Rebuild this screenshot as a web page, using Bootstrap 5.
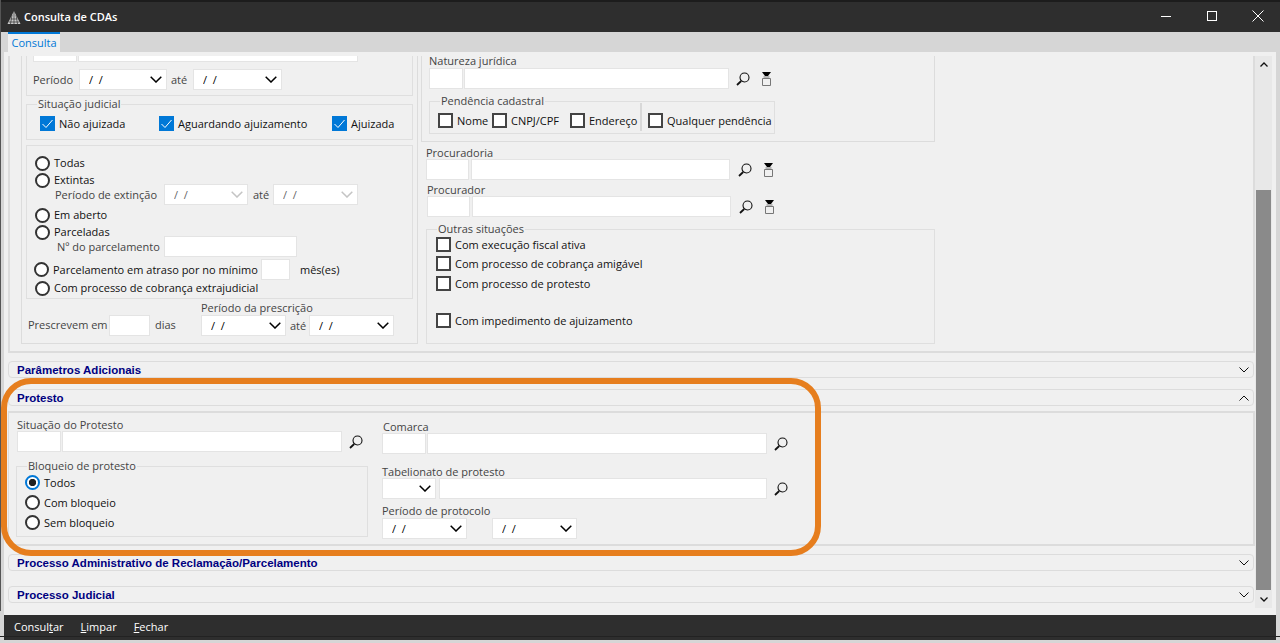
<!doctype html>
<html lang="pt-BR"><head><meta charset="utf-8">
<title>Consulta de CDAs</title>
<link rel="stylesheet" href="https://cdn.jsdelivr.net/npm/bootstrap@5.3.0/dist/css/bootstrap.min.css">
<style>
html,body{height:643px;overflow:hidden;margin:0;background:#d6d6d6;}
body{font:11px/14px "Open Sans","Noto Sans",sans-serif;color:#111;}
.win-title{height:32px;background:#2e2e2e;border-top:2px solid #1c1c1c;color:#fff;font-weight:600;font-size:11px;padding-left:6px;}
.win-title svg{display:block}
.win-ctrls{margin-left:auto;margin-right:-1px;align-self:flex-start;}
.win-ctrl{width:46px;height:28px;display:flex;align-items:center;justify-content:center;}
.win-left{border-left:1px solid #555;height:611px;}
.tabstrip{height:20px;padding-left:7px;}
.tab-on{width:52px;height:20px;background:#f0f0f0;border-top:2px solid #0078d7;color:#0078d7;text-align:center;line-height:17px;}
.client{width:1272px;margin-left:3px;height:563px;background:#f0f0f0;padding-top:4px;}
.pane{width:1251px;flex:none;}
.outer{margin-left:4px;width:1247px;height:297px;border:2px solid #dcdcdc;border-top:0;}
.subl{margin-left:11px;width:397px;height:288px;border:1px solid #dcdcdc;border-top:0;flex:none;padding-left:4px;}
.grp{position:relative;width:387px;border:1px solid #dfdfdf;}
.grp1{height:40px;border-top:0;padding-left:6px;}
.grp2{height:36px;margin-top:8px;padding:11px 0 0 13px;}
.grp3{height:154px;margin-top:5px;padding:9px 0 0 8px;}
.legend{position:absolute;top:-8px;left:10px;background:#f0f0f0;padding:0 1px;color:#444;line-height:14px;}
.clipped{height:6px;overflow:hidden;}
.clipped>*{margin-top:-15px;}
.txt{color:#444;white-space:nowrap;}
.nm{white-space:nowrap;}
.form-control.fld,.form-select.fld{height:21px;min-height:0;padding:0;border:1px solid #e4e4e4;border-radius:0;background-color:#fff;font-size:11px;line-height:14px;box-shadow:none;flex:none;}
.form-select.fld{padding-left:9px;color:#000;background-image:url("data:image/svg+xml,%3csvg xmlns='http://www.w3.org/2000/svg' width='12' height='7'%3e%3cpath d='M.7.7 6 6 11.3.7' fill='none' stroke='%23000' stroke-width='1.5'/%3e%3c/svg%3e");background-position:right 4px center;background-size:12px 7px;}
.form-select.fld:disabled{color:#666;background-color:#fff;background-image:url("data:image/svg+xml,%3csvg xmlns='http://www.w3.org/2000/svg' width='12' height='7'%3e%3cpath d='M.7.7 6 6 11.3.7' fill='none' stroke='%23c4c4c4' stroke-width='1.5'/%3e%3c/svg%3e");}
.form-check-input.tick,.form-check-input.dot{width:15px;height:15px;margin:0;flex:none;background-color:#fff;box-shadow:none;float:none;}
.form-check-input.tick{border:2px solid #444;border-radius:0;}
.form-check-input.tick:checked{background-color:#0078d7;border-color:#0078d7;background-image:url("data:image/svg+xml,%3csvg xmlns='http://www.w3.org/2000/svg' viewBox='0 0 15 15'%3e%3cpath d='M2.500 8 6 11.500 12.500 4' fill='none' stroke='%23fff' stroke-width='1'/%3e%3c/svg%3e");background-size:15px 15px;background-position:center;}
.form-check-input.dot{border:2px solid #333;border-radius:50%;}
.form-check-input.dot:checked{background-color:#fff;border-color:#0078d7;background-image:radial-gradient(circle,#222 0 3.4px,#fff 3.9px);}
.form-check-input.tick.ml6{margin-left:6px;}
.w44{width:44px}.w34{width:34px}.w84{width:84px}.w85{width:85px}.w88{width:88px}.w89{width:89px}.w280{width:280px}.w265{width:265px}.w43{width:43px}.w259{width:259px}.w133{width:133px}.w29{width:29px}.w41{width:41px}.w340{width:340px}.w54{width:54px}.w328{width:328px}
.lw19{width:19px}.lw20{width:20px}.lw22{width:22px}.lw41{width:41px}.lw46{width:46px}.lw81{width:81px}.lw129{width:129px}.lw208{width:208px}
.iw54{width:54px}.iw78{width:78px}.iw70{width:70px}.iw119{width:119px}.iw173{width:173px}
.flex0{flex:none}
.ml1{margin-left:1px}.ml2{margin-left:2px}.ml3{margin-left:3px}.ml4{margin-left:4px}.ml5{margin-left:5px}.ml6{margin-left:6px}.ml7{margin-left:7px}.ml8{margin-left:8px}.ml10{margin-left:10px}.ml12{margin-left:12px}.ml25{margin-left:25px}
.mln1{margin-left:-1px}
.fx{display:flex;align-items:center;}
.r7{margin-top:7px}.r2{margin-top:2px}.r1{margin-top:1px}
.mt4p{margin-top:4px}.mt5p{margin-top:5px}.mt6p{margin-top:6px}.mt8p{margin-top:8px}.mt12p{margin-top:12px}
.rb{height:16px}
.rs{height:11px;margin-top:2px;align-items:flex-start;}
.rs .nm{line-height:14px;}
.gapped{gap:4px}
.pad-per{padding-left:20px;}
.pad-par{padding-left:22px;}
.up1{padding-bottom:2px;}
.pr-lab{margin:2px 0 0 175px;height:14px;}
.pr-row{margin-left:2px;height:21px;}
.subr{margin-left:3px;width:514px;flex:none;}
.natur{height:86px;width:514px;border:1px solid #dcdcdc;border-top:0;padding-left:7px;}
.lab-h{height:12px;line-height:12px;}
.lh10{line-height:10px;}
.pend{position:relative;width:346px;height:33px;border:1px solid #dfdfdf;margin-top:12px;padding:11px 0 0 8px;}
.pend>.fx{height:15px;}
.sep{width:2px;height:28px;background:#d8d8d8;margin-bottom:7px;flex:none;}
.offs{padding-left:5px;}
.outras{position:relative;width:509px;height:115px;border:1px solid #dfdfdf;margin:12px 0 0 5px;padding:7px 0 0 9px;}
.outras .fx{gap:4px;height:15px;margin-bottom:5px;}
.outras .fx.gap4{margin-bottom:4px;}
.outras .fx.mt22{margin-top:22px;}
.acc{width:1246px;margin-left:4px;height:17px;border:1px solid #dcdcdc;border-radius:4px;padding:1px 4px 0 8px;font:700 11.5px/15px "Liberation Sans",sans-serif;color:#000080;justify-content:space-between;}
.acc1{margin-top:8px}.acc2{margin-top:11px}.acc3{margin-top:8px}.acc4{margin-top:15px}
.protbody{width:1247px;margin:5px 0 0 4px;height:135px;border:solid #dcdcdc;border-width:2px 2px 2px 1px;}
.pleft{width:358px;margin-left:8px;flex:none;}
.pright{margin-left:7px;flex:none;}
.bloq{position:relative;width:352px;height:71px;border:1px solid #dfdfdf;margin:14px 0 0 -1px;padding:8px 0 0 8px;}
.bloq .fx{gap:4px;height:15px;margin-bottom:5px;}
.sbar{width:17px;background:#e8e8e8;height:552px;flex:none;}
.sb-a{height:18px;}
.sb-thumb{background:#8a8a8a;width:15px;margin-left:1px;height:401px;}
.sb-gap{height:116px;}
.footbar{height:25px;width:1272px;margin-left:3px;background:#2e2e2e;color:#fff;padding-left:10px;gap:17px;line-height:24px;}
.footline{position:absolute;left:0;top:636px;width:1280px;height:1px;background:#222;}
.annot{position:absolute;left:1px;top:378px;width:820px;height:178px;border:6px solid #e67e1e;border-radius:30px;pointer-events:none;}
</style></head>
<body>
<svg width="0" height="0" class="d-none"><defs>
<symbol id="mag" viewBox="0 0 14 14"><circle cx="8.500" cy="5.500" r="4.500" fill="none" stroke="#111" stroke-width="1.100"/><path d="M5.200 9 1 13" stroke="#111" stroke-width="1.800"/></symbol>
<symbol id="flt" viewBox="0 0 9 14"><path d="M0 0h9L6 4H3Z" fill="#000"/><path d="M1.500 5h6M.5 6.500h8v7h-8z" fill="none" stroke="#777"/></symbol>
</defs></svg>
<div class="win-left">
<div class="win-title d-flex align-items-center">
<svg width="14" height="15" viewBox="0 0 14 15"><path d="M7 1 13.500 14H.5Z" fill="#ccc"/><path d="M7 1V14M5 5 3.500 14M9 5l1.500 9M3.500 9h7M2 12h10" stroke="#2e2e2e" stroke-width=".7"/></svg>
<span class="ml3">Consulta de CDAs</span>
<div class="win-ctrls d-flex">
<div class="win-ctrl"><svg width="10" height="10"><path d="M0 5.500h10" stroke="#fff"/></svg></div>
<div class="win-ctrl"><svg width="10" height="10"><rect x=".5" y=".5" width="9" height="9" fill="none" stroke="#fff"/></svg></div>
<div class="win-ctrl"><svg width="12" height="12"><path d="M.5.500l11 11M11.500.5l-11 11" stroke="#fff"/></svg></div>
</div></div>
<div class="tabstrip"><div class="tab-on">Consulta</div></div>
<div class="client">
<div class="d-flex">
<div class="pane">
<div class="outer d-flex">
<!-- left -->
<div class="subl">
<div class="grp grp1">
<div class="clipped fx"><input class="form-control fld w44"><input class="form-control fld w280 ml1"></div>
<div class="fx r7"><span class="txt lw46 flex0">Período</span><select class="form-select fld w88"><option>/&nbsp;&nbsp;/</option></select><span class="txt ml4 lw22 flex0">até</span><select class="form-select fld w89"><option>/&nbsp;&nbsp;/</option></select></div>
</div>
<div class="grp grp2"><div class="legend">Situação judicial</div>
<div class="fx"><div class="fx iw119 flex0"><input class="form-check-input tick" type="checkbox" checked><span class="nm ml4">Não ajuizada</span></div><div class="fx iw173 flex0"><input class="form-check-input tick" type="checkbox" checked><span class="nm ml4">Aguardando ajuizamento</span></div><input class="form-check-input tick" type="checkbox" checked><span class="nm ml4">Ajuizada</span></div>
</div>
<div class="grp grp3">
<div class="fx rb gapped"><input class="form-check-input dot" type="radio" name="a"><span class="nm">Todas</span></div>
<div class="fx rs gapped"><input class="form-check-input dot" type="radio" name="a"><span class="nm">Extintas</span></div>
<div class="fx"><span class="txt pad-per lw129 flex0">Período de extinção</span><select class="form-select fld w84" disabled><option>/&nbsp;&nbsp;/</option></select><span class="txt ml5 lw20 flex0">até</span><select class="form-select fld w85" disabled><option>/&nbsp;&nbsp;/</option></select></div>
<div class="fx rb gapped r2"><input class="form-check-input dot" type="radio" name="a"><span class="nm">Em aberto</span></div>
<div class="fx rs gapped"><input class="form-check-input dot" type="radio" name="a"><span class="nm">Parceladas</span></div>
<div class="fx"><span class="txt pad-par lw129 flex0">Nº do parcelamento</span><input class="form-control fld w133"></div>
<div class="fx r2 mln1"><input class="form-check-input dot" type="radio" name="a"><span class="nm ml4 lw208 flex0">Parcelamento em atraso por no mínimo</span><input class="form-control fld w29"><span class="nm ml10">mês(es)</span></div>
<div class="fx rb gapped"><input class="form-check-input dot" type="radio" name="a"><span class="nm">Com processo de cobrança extrajudicial</span></div>
</div>
<div class="txt pr-lab">Período da prescrição</div>
<div class="fx pr-row"><span class="txt lw81 flex0 up1">Prescrevem em</span><input class="form-control fld w41"><span class="txt ml5 lw46 flex0 up1">dias</span><select class="form-select fld w85"><option>/&nbsp;&nbsp;/</option></select><span class="txt ml4 lw19 flex0">até</span><select class="form-select fld w85"><option>/&nbsp;&nbsp;/</option></select></div>
</div>
<!-- right -->
<div class="subr">
<div class="natur">
<div class="txt lab-h lh10">Natureza jurídica</div>
<div class="fx">
<input class="form-control fld w34"><input class="form-control fld w265 ml1">
<svg class="ml7" width="14" height="14"><use href="#mag"/></svg>
<svg class="ml12" width="9" height="14"><use href="#flt"/></svg>
</div>
<div class="pend"><div class="legend">Pendência cadastral</div>
<div class="fx"><div class="fx iw54 flex0"><input class="form-check-input tick" type="checkbox"><span class="nm ml4">Nome</span></div><div class="fx iw78 flex0"><input class="form-check-input tick" type="checkbox"><span class="nm ml4">CNPJ/CPF</span></div><div class="fx iw70 flex0"><input class="form-check-input tick" type="checkbox"><span class="nm ml4">Endereço</span></div><div class="sep"></div><input class="form-check-input tick ml6" type="checkbox"><span class="nm ml4">Qualquer pendência</span></div>
</div>
</div>
<div class="offs">
<div class="txt lab-h mt5p">Procuradoria</div>
<div class="fx">
<input class="form-control fld w43"><input class="form-control fld w259 ml2">
<svg class="ml8" width="14" height="14"><use href="#mag"/></svg>
<svg class="ml12" width="9" height="14"><use href="#flt"/></svg>
</div>
<div class="txt lab-h mt4p ml1">Procurador</div>
<div class="fx ml1">
<input class="form-control fld w43"><input class="form-control fld w259 ml2">
<svg class="ml8" width="14" height="14"><use href="#mag"/></svg>
<svg class="ml12" width="9" height="14"><use href="#flt"/></svg>
</div>
</div>
<div class="outras"><div class="legend">Outras situações</div>
<div class="fx gap4"><input class="form-check-input tick" type="checkbox"><span class="nm">Com execução fiscal ativa</span></div>
<div class="fx"><input class="form-check-input tick" type="checkbox"><span class="nm">Com processo de cobrança amigável</span></div>
<div class="fx"><input class="form-check-input tick" type="checkbox"><span class="nm">Com processo de protesto</span></div>
<div class="fx mt22"><input class="form-check-input tick" type="checkbox"><span class="nm">Com impedimento de ajuizamento</span></div>
</div>
</div>
</div>
<div class="acc acc1 d-flex align-items-center"><span>Parâmetros Adicionais</span><svg width="10" height="6"><path d="M.500.500 5 5 9.500.5" fill="none" stroke="#111"/></svg></div>
<div class="acc acc2 d-flex align-items-center"><span>Protesto</span><svg width="10" height="6"><path d="M.500 5.500 5 1l4.500 4.500" fill="none" stroke="#111"/></svg></div>
<div class="protbody d-flex">
<div class="pleft">
<div class="txt lab-h mt6p">Situação do Protesto</div>
<div class="fx"><input class="form-control fld w44"><input class="form-control fld w280 ml1">
<svg class="ml7" width="14" height="14"><use href="#mag"/></svg></div>
<div class="bloq"><div class="legend">Bloqueio de protesto</div>
<div class="fx"><input class="form-check-input dot" type="radio" name="b" checked><span class="nm">Todos</span></div>
<div class="fx"><input class="form-check-input dot" type="radio" name="b"><span class="nm">Com bloqueio</span></div>
<div class="fx"><input class="form-check-input dot" type="radio" name="b"><span class="nm">Sem bloqueio</span></div>
</div>
</div>
<div class="pright">
<div class="txt lab-h mt8p ml1">Comarca</div>
<div class="fx"><input class="form-control fld w44"><input class="form-control fld w340 ml1">
<svg class="ml7" width="14" height="14"><use href="#mag"/></svg></div>
<div class="txt lab-h mt12p">Tabelionato de protesto</div>
<div class="fx"><select class="form-select fld w54"><option></option></select><input class="form-control fld w328 ml3">
<svg class="ml7" width="14" height="14"><use href="#mag"/></svg></div>
<div class="txt lab-h mt6p">Período de protocolo</div>
<div class="fx r1"><select class="form-select fld w85"><option>/&nbsp;&nbsp;/</option></select><select class="form-select fld w85 ml25"><option>/&nbsp;&nbsp;/</option></select></div>
</div>
</div>
<div class="acc acc3 d-flex align-items-center"><span>Processo Administrativo de Reclamação/Parcelamento</span><svg width="10" height="6"><path d="M.500.500 5 5 9.500.5" fill="none" stroke="#111"/></svg></div>
<div class="acc acc4 d-flex align-items-center"><span>Processo Judicial</span><svg width="10" height="6"><path d="M.500.500 5 5 9.500.5" fill="none" stroke="#111"/></svg></div>
</div>
<div class="sbar d-flex flex-column">
<div class="sb-a d-flex align-items-center justify-content-center"><svg width="8" height="5"><path d="M.500 4.500 4 1l3.500 3.500" fill="none" stroke="#111" stroke-width="1.300"/></svg></div>
<div class="sb-gap"></div>
<div class="sb-thumb"></div>
<div class="sb-a d-flex align-items-center justify-content-center"><svg width="8" height="5"><path d="M.500.500 4 4 7.500.5" fill="none" stroke="#111" stroke-width="1.300"/></svg></div>
</div>
</div>
</div>
<div class="footbar d-flex"><span>Consul<u>t</u>ar</span><span><u>L</u>impar</span><span><u>F</u>echar</span></div>
</div>
<div class="footline"></div>
<div class="annot"></div>
</body></html>
